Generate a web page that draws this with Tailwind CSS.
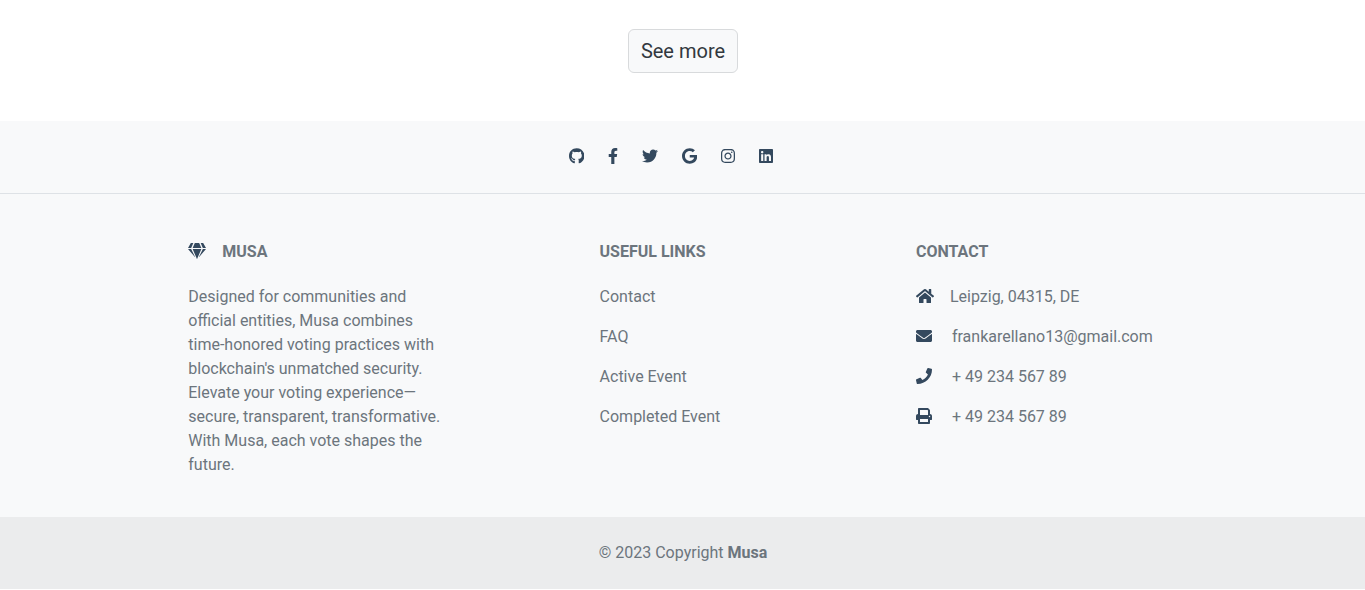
<!DOCTYPE html>
<html lang="en">
<head>
<meta charset="utf-8">
<meta name="viewport" content="width=device-width, initial-scale=1">
<title>Musa</title>
<script src="https://cdn.jsdelivr.net/npm/@tailwindcss/browser@4"></script>
</head>
<body class="bg-white font-[Roboto,sans-serif] text-base text-[#6c757d]">
<main class="flex justify-center pt-[29px] pb-12 pl-px">
  <button type="button" class="rounded-md border border-[#d8dadc] bg-[#f8f9fa] px-3 py-[6px] text-xl leading-[30px] text-[#32383e]">See more</button>
</main>

<footer class="bg-[#f8f9fa]">
  <nav aria-label="Social media" class="flex justify-center border-b border-[#dee2e6] py-6 pl-px text-[#34495e]">
    <a href="#" aria-label="GitHub" class="mr-6 flex h-6 items-center pb-[2px]"><svg class="h-4" viewBox="0 0 496 512" fill="currentColor"><path d="M165.900 397.400c0 2-2.300 3.600-5.200 3.600-3.300.3-5.600-1.300-5.600-3.600 0-2 2.300-3.600 5.200-3.600 3-.3 5.600 1.300 5.600 3.600zm-31.100-4.500c-.7 2 1.300 4.300 4.300 4.900 2.600 1 5.600 0 6.200-2s-1.300-4.300-4.300-5.200c-2.600-.7-5.500.3-6.200 2.300zm44.200-1.700c-2.900.7-4.900 2.600-4.600 4.900.3 2 2.900 3.300 5.900 2.600 2.900-.7 4.900-2.600 4.600-4.600-.3-1.900-3-3.200-5.900-2.900zM244.800 8C106.100 8 0 113.300 0 252c0 110.900 69.800 205.800 169.500 239.200 12.800 2.300 17.300-5.600 17.300-12.100 0-6.200-.3-40.400-.3-61.400 0 0-70 15-84.700-29.800 0 0-11.400-29.100-27.800-36.600 0 0-22.900-15.700 1.600-15.400 0 0 24.900 2 38.600 25.800 21.900 38.600 58.600 27.500 72.900 20.900 2.300-16 8.800-27.100 16-33.700-55.900-6.200-112.300-14.300-112.300-110.500 0-27.500 7.600-41.300 23.600-58.900-2.600-6.500-11.100-33.300 2.600-67.900 20.900-6.500 69 27 69 27 20-5.600 41.500-8.500 62.800-8.500s42.800 2.900 62.800 8.500c0 0 48.100-33.600 69-27 13.700 34.700 5.200 61.400 2.600 67.900 16 17.700 25.800 31.500 25.800 58.900 0 96.500-58.900 104.200-114.800 110.500 9.200 7.900 17 22.900 17 46.400 0 33.700-.3 75.400-.3 83.600 0 6.500 4.600 14.400 17.300 12.100C428.200 457.800 496 362.900 496 252 496 113.300 383.500 8 244.800 8z"/></svg></a>
    <a href="#" aria-label="Facebook" class="mr-6 flex h-6 items-center pb-[2px]"><svg class="h-4" viewBox="0 0 320 512" fill="currentColor"><path d="M279.140 288l14.220-92.660h-88.910v-60.130c0-25.350 12.420-50.060 52.240-50.060h40.420V6.260S260.430 0 225.360 0c-73.220 0-121.080 44.380-121.080 124.720v70.620H22.890V288h81.390v224h100.170V288z"/></svg></a>
    <a href="#" aria-label="Twitter" class="mr-6 flex h-6 items-center pb-[2px]"><svg class="h-4" viewBox="0 0 512 512" fill="currentColor"><path d="M459.370 151.716c.325 4.548.325 9.097.325 13.645 0 138.720-105.583 298.558-298.558 298.558-59.452 0-114.680-17.219-161.137-47.106 8.447.974 16.568 1.299 25.340 1.299 49.055 0 94.213-16.568 130.274-44.832-46.132-.975-84.792-31.188-98.112-72.772 6.498.974 12.995 1.624 19.818 1.624 9.421 0 18.843-1.300 27.614-3.573-48.081-9.747-84.143-51.980-84.143-102.985v-1.299c13.969 7.797 30.214 12.670 47.431 13.319-28.264-18.843-46.781-51.005-46.781-87.391 0-19.492 5.197-37.360 14.294-52.954 51.655 63.675 129.300 105.258 216.365 109.807-1.624-7.797-2.599-15.918-2.599-24.040 0-57.828 46.782-104.934 104.934-104.934 30.213 0 57.502 12.670 76.670 33.137 23.715-4.548 46.456-13.320 66.599-25.340-7.798 24.366-24.366 44.833-46.132 57.827 21.117-2.273 41.584-8.122 60.426-16.243-14.292 20.791-32.161 39.308-52.628 54.253z"/></svg></a>
    <a href="#" aria-label="Google" class="mr-6 flex h-6 items-center pb-[2px]"><svg class="h-4" viewBox="0 0 488 512" fill="currentColor"><path d="M488 261.800C488 403.300 391.100 504 248 504 110.800 504 0 393.200 0 256S110.800 8 248 8c66.800 0 123 24.500 166.300 64.900l-67.500 64.900C258.500 52.600 94.300 116.600 94.300 256c0 86.500 69.100 156.600 153.700 156.600 98.200 0 135-70.400 140.800-106.900H248v-85.300h236.100c2.300 12.700 3.900 24.900 3.900 41.400z"/></svg></a>
    <a href="#" aria-label="Instagram" class="mr-6 flex h-6 items-center pb-[2px]"><svg class="h-4" viewBox="0 0 448 512" fill="currentColor"><path d="M224.100 141c-63.600 0-114.900 51.300-114.900 114.900s51.300 114.900 114.900 114.900S339 319.500 339 255.900 287.700 141 224.100 141zm0 189.600c-41.100 0-74.700-33.500-74.700-74.700s33.500-74.700 74.700-74.700 74.700 33.500 74.700 74.700-33.600 74.700-74.700 74.700zm146.400-194.300c0 14.900-12 26.800-26.800 26.800-14.900 0-26.800-12-26.800-26.800s12-26.800 26.800-26.800 26.800 12 26.800 26.800zm76.100 27.200c-1.700-35.900-9.900-67.700-36.200-93.900-26.200-26.200-58-34.400-93.900-36.200-37-2.100-147.900-2.100-184.900 0-35.800 1.700-67.600 9.900-93.900 36.100s-34.400 58-36.200 93.900c-2.100 37-2.100 147.900 0 184.900 1.700 35.900 9.900 67.700 36.200 93.900s58 34.400 93.900 36.200c37 2.100 147.900 2.100 184.900 0 35.900-1.700 67.700-9.900 93.900-36.200 26.200-26.200 34.400-58 36.200-93.900 2.100-37 2.100-147.800 0-184.800zM398.800 388c-7.800 19.600-22.900 34.700-42.600 42.600-29.500 11.700-99.500 9-132.100 9s-102.700 2.600-132.100-9c-19.600-7.800-34.700-22.900-42.600-42.600-11.700-29.500-9-99.500-9-132.100s-2.600-102.700 9-132.100c7.800-19.600 22.900-34.700 42.600-42.600 29.500-11.700 99.500-9 132.100-9s102.700-2.600 132.100 9c19.600 7.800 34.700 22.900 42.600 42.600 11.700 29.500 9 99.500 9 132.100s2.700 102.700-9 132.100z"/></svg></a>
    <a href="#" aria-label="LinkedIn" class="mr-6 flex h-6 items-center pb-[2px]"><svg class="h-4" viewBox="0 0 448 512" fill="currentColor"><path d="M416 32H31.900C14.300 32 0 46.500 0 64.300v383.400C0 465.500 14.300 480 31.900 480H416c17.600 0 32-14.500 32-32.300V64.300c0-17.800-14.400-32.300-32-32.300zM135.400 416H69V202.200h66.500V416zm-33.200-243c-21.300 0-38.500-17.300-38.500-38.500S80.900 96 102.200 96c21.200 0 38.500 17.300 38.500 38.500 0 21.300-17.200 38.500-38.500 38.500zm282.100 243h-66.400V312c0-24.800-.5-56.700-34.500-56.700-34.600 0-39.900 27-39.900 54.900V416h-66.400V202.200h63.700v29.200h.9c8.900-16.800 30.600-34.500 62.900-34.500 67.200 0 79.700 44.300 79.700 101.900V416z"/></svg></a>
  </nav>

  <div class="mx-auto flex max-w-[1139px] justify-around pt-12 pb-10">
    <section class="w-1/4 px-3">
      <h2 class="mb-6 flex items-center gap-4 leading-[19px] font-bold"><span class="pb-[2px]"><svg class="h-4 text-[#34495e]" viewBox="0 0 576 512" fill="currentColor" aria-hidden="true"><path d="M485.500 0L576 160H474.900L405.700 0h79.800zm-128 0l69.200 160H149.300L218.500 0h139zm-267 0h79.800l-69.200 160H0L90.500 0zM0 192h100.700l123 251.700c1.500 3.100-2.700 5.900-5 3.300L0 192zm148.200 0h279.600l-137 318.200c-1 2.400-4.500 2.400-5.500 0L148.200 192zm204.100 251.700l123-251.700H576L357.300 446.900c-2.300 2.700-6.500-.1-5-3.200z"/></svg></span>MUSA</h2>
      <p>Designed for communities and official entities, Musa combines time-honored voting practices with blockchain's unmatched security. Elevate your voting experience—secure, transparent, transformative. With Musa, each vote shapes the future.</p>
    </section>
    <section class="w-1/6 px-3">
      <h2 class="mb-6 leading-[19px] font-bold">USEFUL LINKS</h2>
      <ul class="flex flex-col gap-4">
        <li><a href="#">Contact</a></li>
        <li><a href="#">FAQ</a></li>
        <li><a href="#">Active Event</a></li>
        <li><a href="#">Completed Event</a></li>
      </ul>
    </section>
    <section class="w-1/4 px-3">
      <h2 class="mb-6 leading-[19px] font-bold">CONTACT</h2>
      <ul class="flex flex-col gap-4">
        <li class="flex items-center gap-4"><span class="pb-[2px]"><svg class="h-4 text-[#34495e]" viewBox="0 0 576 512" fill="currentColor" aria-hidden="true"><path d="M280.370 148.260L96 300.110V464a16 16 0 0 0 16 16l112.060-.29a16 16 0 0 0 15.920-16V368a16 16 0 0 1 16-16h64a16 16 0 0 1 16 16v95.640a16 16 0 0 0 16 16.050L464 480a16 16 0 0 0 16-16V300L295.670 148.260a12.190 12.190 0 0 0-15.300 0zM571.600 251.470L488 182.560V44.050a12 12 0 0 0-12-12h-56a12 12 0 0 0-12 12v72.610L318.470 43a48 48 0 0 0-61 0L4.340 251.470a12 12 0 0 0-1.600 16.900l25.500 31A12 12 0 0 0 45.150 301l235.220-193.740a12.190 12.190 0 0 1 15.300 0L530.900 301a12 12 0 0 0 16.900-1.600l25.500-31a12 12 0 0 0-1.700-16.930z"/></svg></span>Leipzig, 04315, DE</li>
        <li class="flex items-center gap-5"><span class="pb-[2px]"><svg class="h-4 text-[#34495e]" viewBox="0 0 512 512" fill="currentColor" aria-hidden="true"><path d="M502.300 190.800c3.900-3.100 9.700-.2 9.700 4.700V400c0 26.500-21.500 48-48 48H48c-26.500 0-48-21.500-48-48V195.600c0-5 5.700-7.800 9.700-4.700 22.400 17.400 52.100 39.500 154.100 113.600 21.100 15.400 56.700 47.800 92.200 47.600 35.700.3 72-32.800 92.300-47.600 102-74.100 131.600-96.300 154-113.700zM256 320c23.200.4 56.600-29.200 73.400-41.400 132.700-96.300 142.800-104.700 173.400-128.700 5.800-4.500 9.200-11.500 9.200-18.900v-19c0-26.500-21.500-48-48-48H48c-26.500 0-48 21.500-48 48v19c0 7.400 3.400 14.300 9.200 18.900 30.600 23.900 40.700 32.400 173.400 128.700 16.800 12.200 50.200 41.800 73.400 41.400z"/></svg></span>frankarellano13@gmail.com</li>
        <li class="flex items-center gap-5"><span class="pb-[2px]"><svg class="h-4 text-[#34495e]" viewBox="0 0 512 512" fill="currentColor" aria-hidden="true"><path d="M493.400 24.600l-104-24c-11.300-2.600-22.900 3.300-27.500 13.900l-48 112c-4.200 9.800-1.400 21.300 6.900 28l60.600 49.600c-36 76.700-98.900 140.500-177.200 177.200l-49.600-60.600c-6.800-8.300-18.200-11.100-28-6.900l-112 48C3.900 366.500-2 378.100.6 389.400l24 104C27.100 504.200 36.700 512 48 512c256.100 0 464-207.500 464-464 0-11.200-7.700-20.900-18.600-23.400z"/></svg></span>+ 49 234 567 89</li>
        <li class="flex items-center gap-5"><span class="pb-[2px]"><svg class="h-4 text-[#34495e]" viewBox="0 0 512 512" fill="currentColor" aria-hidden="true"><path d="M448 192V77.250c0-8.490-3.370-16.620-9.370-22.630L393.370 9.370c-6-6-14.140-9.370-22.630-9.370H96C78.330 0 64 14.330 64 32v160c-35.350 0-64 28.650-64 64v112c0 8.840 7.160 16 16 16h48v96c0 17.670 14.330 32 32 32h320c17.670 0 32-14.330 32-32v-96h48c8.840 0 16-7.160 16-16V256c0-35.350-28.650-64-64-64zm-64 256H128v-96h256v96zm0-224H128V64h240l16 16v144zm48 72c-13.250 0-24-10.750-24-24 0-13.260 10.750-24 24-24s24 10.740 24 24c0 13.250-10.750 24-24 24z"/></svg></span>+ 49 234 567 89</li>
      </ul>
    </section>
  </div>

  <div class="bg-black/5 py-6 pl-px text-center">© 2023 Copyright <a href="#" class="font-bold">Musa</a></div>
</footer>
</body>
</html>
